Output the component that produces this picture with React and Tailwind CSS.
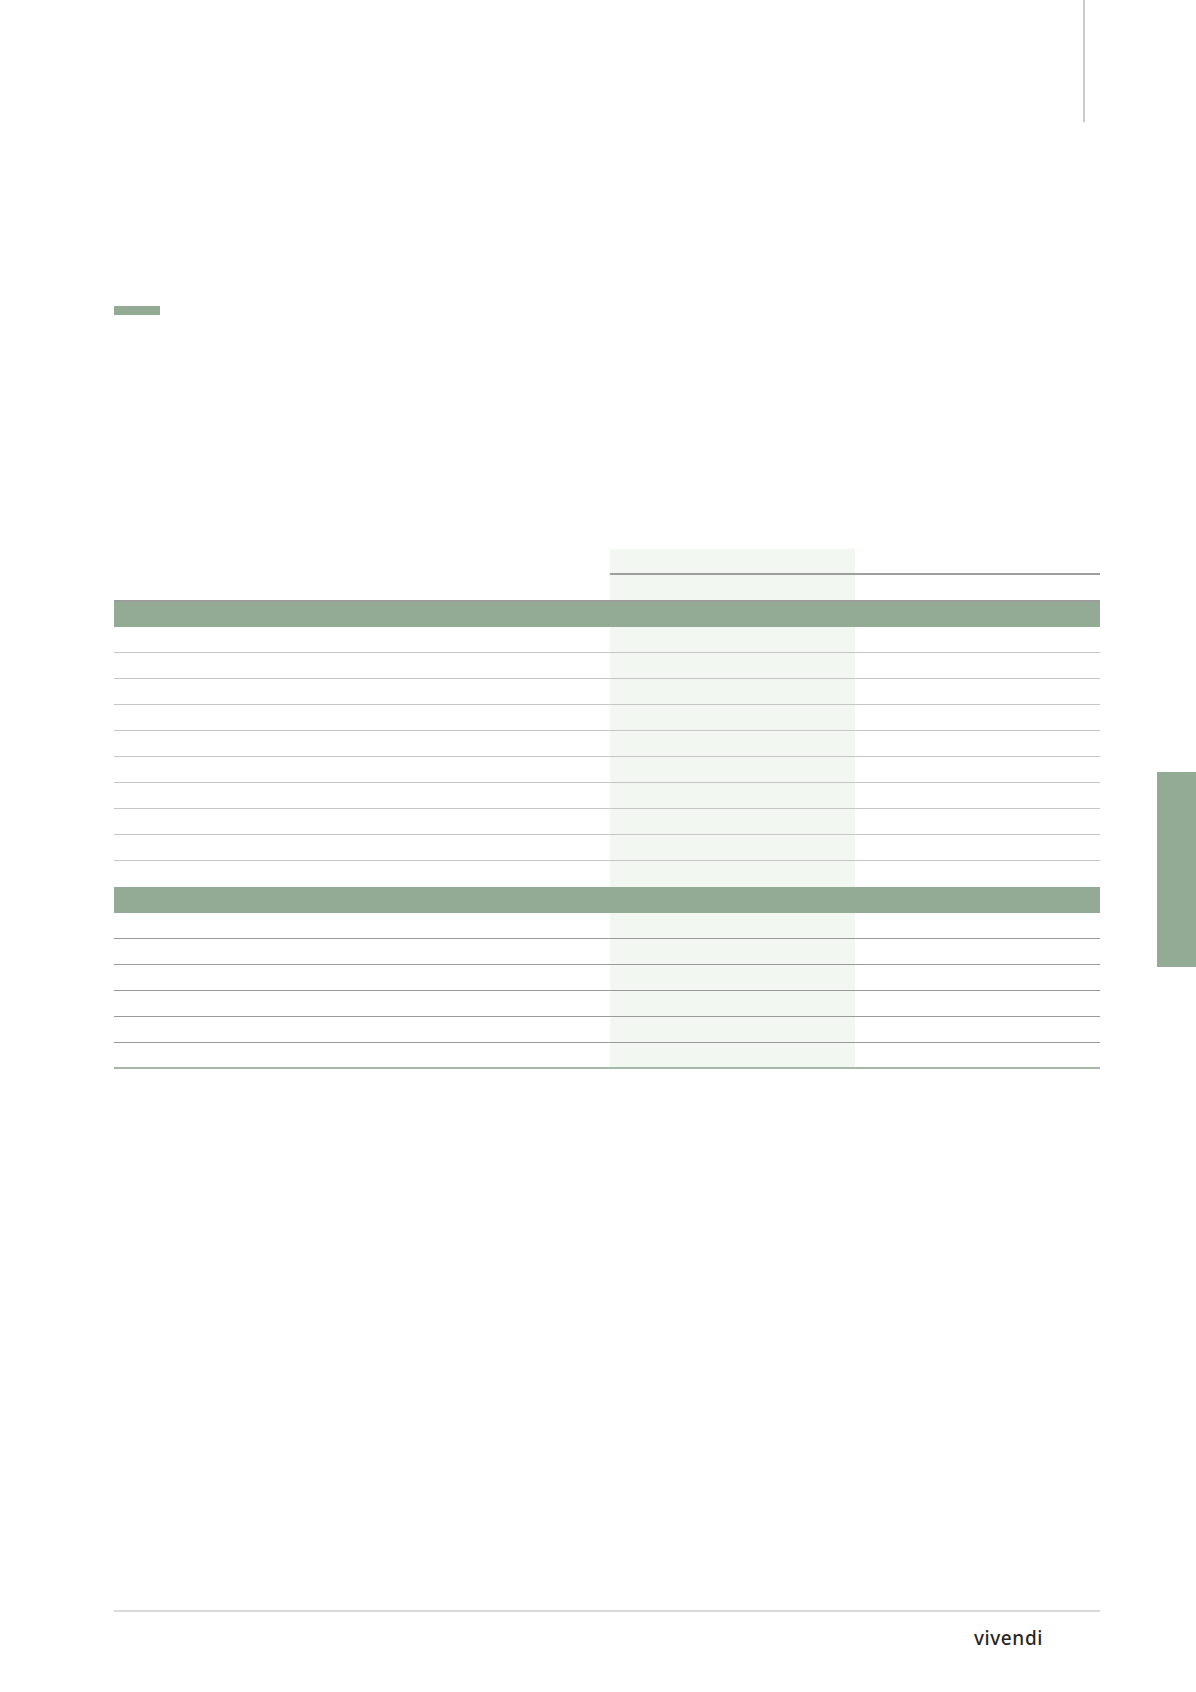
const green = "bg-[#93ab94]";

const Cell = ({ band, children, className = "" }) => (
  <div className={`${band ? "bg-[#f2f7f1]" : ""} ${className}`}>{children}</div>
);

// one body row: 6 columns, the 3rd and 4th sit on the pale band
const Row = ({ line }) => (
  <div className="grid grid-cols-[450px_46px_142px_103px_142px_103px]">
    {[0, 1, 2, 3, 4, 5].map((i) => (
      <Cell key={i} band={i === 2 || i === 3} className={`h-[26px] ${line}`} />
    ))}
  </div>
);

const SectionHead = ({ top }) => (
  <div className={`h-[26px] ${top ? "border-t-2 border-[#9c9c9c] h-[27px]" : ""} ${green}`} />
);

export default function App() {
  return (
    <div className="w-[1196px] h-[1692px] bg-white flex flex-col font-['Inter',sans-serif]">
      {/* top rule */}
      <div className="h-[122px] flex justify-end pr-[111px]">
        <div className="w-[2px] h-full bg-[#cbcbcb]" />
      </div>

      <div className="pl-[114px] pt-[184px]">
        <div className={`w-[46px] h-[9px] ${green}`} />
      </div>

      <div className="flex pl-[114px] pt-[234px]">
        <div className="w-[986px] flex flex-col">
          {/* header */}
          <div className="grid grid-cols-[450px_46px_142px_103px_142px_103px] h-[51px]">
            <Cell />
            <Cell />
            <Cell band className="pt-[24px]">
              <div className="h-[2px] bg-[#9c9f9c]" />
            </Cell>
            <Cell band className="pt-[24px]">
              <div className="h-[2px] bg-[#9c9f9c]" />
            </Cell>
            <Cell className="pt-[24px]">
              <div className="h-[2px] bg-[#9c9f9c]" />
            </Cell>
            <Cell className="pt-[24px]">
              <div className="h-[2px] bg-[#9c9f9c]" />
            </Cell>
          </div>

          <SectionHead top />
          {Array.from({ length: 9 }).map((_, i) => (
            <Row key={i} line="border-b border-[#c6c6c6]" />
          ))}
          <Row line="" />

          <SectionHead />
          {Array.from({ length: 5 }).map((_, i) => (
            <Row key={i} line="border-b border-[#9a9a9a]" />
          ))}
          <Row line="border-b-2 border-[#a6b9a6]" />
        </div>

        {/* side tab */}
        <div className={`ml-[57px] mt-[223px] w-[39px] h-[195px] ${green}`} />
      </div>

      {/* footer */}
      <div className="mt-auto pb-[42px] px-[114px] pr-[96px]">
        <div className="h-[2px] bg-[#dadada]" />
        <div className="flex justify-end pr-[57px] pt-[14px]">
          <span className="text-[19px] leading-[24px] font-medium tracking-[0.6px] text-[#2a2521] font-['Noto_Sans',sans-serif]">
            vivendi
          </span>
        </div>
      </div>
    </div>
  );
}
